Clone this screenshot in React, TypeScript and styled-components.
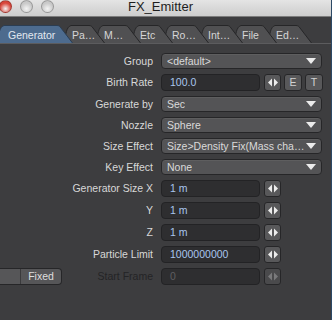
import React from "react";
import styled, { createGlobalStyle } from "styled-components";

const GlobalStyle = createGlobalStyle`
  html, body {
    margin: 0;
    padding: 0;
    background: #3d3d3f;
  }
  body {
    font-family: "Lucida Grande", "Liberation Sans", Arial, sans-serif;
    -webkit-font-smoothing: antialiased;
  }
`;

type tab = {
  label: string;
  width: number;
};

const tabs: tab[] = [
  { label: "Pa…", width: 41 },
  { label: "M…", width: 45 },
  { label: "Etc", width: 41 },
  { label: "Ro…", width: 45 },
  { label: "Int…", width: 43 },
  { label: "File", width: 43 },
  { label: "Ed…", width: 44 },
];

type row =
  | { kind: "select"; label: string; value: string }
  | { kind: "number"; label: string; value: string; env?: boolean; off?: boolean };

const rows: row[] = [
  { kind: "select", label: "Group", value: "<default>" },
  { kind: "number", label: "Birth Rate", value: "100.0", env: true },
  { kind: "select", label: "Generate by", value: "Sec" },
  { kind: "select", label: "Nozzle", value: "Sphere" },
  { kind: "select", label: "Size Effect", value: "Size>Density Fix(Mass cha…" },
  { kind: "select", label: "Key Effect", value: "None" },
  { kind: "number", label: "Generator Size X", value: "1 m" },
  { kind: "number", label: "Y", value: "1 m" },
  { kind: "number", label: "Z", value: "1 m" },
  { kind: "number", label: "Particle Limit", value: "1000000000" },
  { kind: "number", label: "Start Frame", value: "0", off: true },
];

// tab outline, slanted on the right
const TabShape = ({ w, selected }: { w: number; selected?: boolean }) => (
  <TabSvg width={w} height={18} viewBox={`0 0 ${w} 18`}>
    <path
      d={`M0.5 18 C1.5 9 2.5 2 7 0.5 L${w - 16} 0.5 C${w - 14} 0.5 ${w - 13} 1.5 ${w - 12} 3 L${w - 0.5} 18`}
      fill={selected ? "#4d6b8e" : "#505052"}
      stroke={selected ? "#2b3d52" : "#262628"}
      strokeWidth="1"
    />
  </TabSvg>
);

const ArrowsIcon = ({ dim }: { dim?: boolean }) => (
  <svg width="10" height="9" viewBox="0 0 10 9">
    <path d="M4 0.5 L4 8.5 L0 4.5 Z M6 0.5 L6 8.5 L10 4.5 Z" fill={dim ? "#7a7a7c" : "#ececec"} />
  </svg>
);

const DownArrow = () => (
  <svg width="10" height="6" viewBox="0 0 10 6">
    <path d="M0 0 L10 0 L5 6 Z" fill="#ececec" />
  </svg>
);

const App: React.FC = () => {
  return (
    <>
      <GlobalStyle />
      <Window>
        <TitleBar>
          <Lights>
            <Light color="#d8453a" />
            <Light color="#c9c9c9" />
            <Light color="#c9c9c9" />
          </Lights>
          <Title>FX_Emitter</Title>
        </TitleBar>
        <TabBar>
          <Tab w={76} first selected>
            <TabShape w={76} selected />
            <TabLabel selected>Generator</TabLabel>
          </Tab>
          {tabs.map((t, i) => (
            <Tab key={t.label} w={t.width} z={tabs.length - i}>
              <TabShape w={t.width} />
              <TabLabel>{t.label}</TabLabel>
            </Tab>
          ))}
        </TabBar>
        <Divider />
        <Form>
          {rows.map((r) => (
            <Row key={r.label} tall={r.kind === "number"}>
              <LabelCell>
                {r.label === "Start Frame" ? (
                  <FixedButton>
                    <FixedBox />
                    <FixedText>Fixed</FixedText>
                  </FixedButton>
                ) : (
                  <span />
                )}
                <Label off={r.kind === "number" && r.off}>{r.label}</Label>
              </LabelCell>
              {r.kind === "select" ? (
                <Select>
                  <SelectText>{r.value}</SelectText>
                  <DownArrow />
                </Select>
              ) : (
                <Controls>
                  <NumberField off={r.off}>{r.value}</NumberField>
                  <SmallButton off={r.off}>
                    <ArrowsIcon dim={r.off} />
                  </SmallButton>
                  {r.env ? (
                    <>
                      <SmallButton wide>E</SmallButton>
                      <SmallButton wide>T</SmallButton>
                    </>
                  ) : null}
                </Controls>
              )}
            </Row>
          ))}
        </Form>
      </Window>
    </>
  );
};

export default App;

const Window = styled.div`
  width: 332px;
  height: 320px;
  overflow: hidden;
  background: #3d3d3f;
  box-sizing: border-box;
  border-right: 1px solid #2c4966;
`;

const TitleBar = styled.div`
  height: 16px;
  display: flex;
  align-items: center;
  background: linear-gradient(#e4e4e4, #cdcdcd);
  border-bottom: 1px solid #7c7c7c;
  overflow: hidden;
`;

const Lights = styled.div`
  display: flex;
  gap: 8px;
  margin-left: -1px;
  margin-top: -3px;
`;

const Light = styled.div<{ color: string }>`
  width: 13px;
  height: 13px;
  border-radius: 50%;
  box-sizing: border-box;
  border: 1px solid rgba(0, 0, 0, 0.25);
  background: radial-gradient(circle at 50% 70%, #f4f4f4 0%, ${({ color }) => color} 60%);
`;

const Title = styled.span`
  margin-left: 74px;
  margin-top: -3px;
  font-size: 13px;
  color: #1e1e1e;
  cursor: default;
`;

const TabBar = styled.div`
  display: flex;
  margin-top: 8px;
  height: 18px;
`;

const Tab = styled.div<{ w: number; first?: boolean; selected?: boolean; z?: number }>`
  position: relative;
  width: ${({ w }) => w}px;
  height: 18px;
  margin-left: ${({ first }) => (first ? "-3px" : "-9px")};
  z-index: ${({ selected, z }) => (selected ? 20 : z || 1)};
  flex-shrink: 0;
  display: flex;
  align-items: center;
`;

const TabSvg = styled.svg`
  position: absolute;
  left: 0;
  top: 0;
`;

const TabLabel = styled.span<{ selected?: boolean }>`
  position: relative;
  padding-left: ${({ selected }) => (selected ? "11px" : "8px")};
  padding-top: 1px;
  font-size: 10.5px;
  color: ${({ selected }) => (selected ? "#e2e8f0" : "#d6d6d6")};
  white-space: nowrap;
`;

const Divider = styled.div`
  height: 1px;
  background: #5c5c5e;
`;

const Form = styled.div`
  padding-top: 6px;
  display: flex;
  flex-direction: column;
`;

const Row = styled.div<{ tall?: boolean }>`
  display: grid;
  grid-template-columns: 153px 1fr;
  column-gap: 8px;
  align-items: center;
  height: ${({ tall }) => (tall ? "22px" : "21px")};
`;

const LabelCell = styled.div`
  display: flex;
  justify-content: space-between;
  align-items: center;
`;

const Label = styled.span<{ off?: boolean }>`
  font-size: 10.5px;
  color: ${({ off }) => (off ? "#242426" : "#d8d8d8")};
  white-space: nowrap;
`;

const FixedButton = styled.div`
  display: flex;
  width: 62px;
  height: 17px;
  box-sizing: border-box;
  border: 1px solid #262628;
  border-left: 0;
  border-radius: 0 4px 4px 0;
  background: #565658;
  overflow: hidden;
`;

const FixedBox = styled.div`
  width: 20px;
  border-right: 1px solid #3a3a3c;
`;

const FixedText = styled.span`
  flex: 1;
  text-align: center;
  font-size: 10.5px;
  line-height: 15px;
  color: #dedede;
`;

const Select = styled.div`
  width: 161px;
  height: 16px;
  box-sizing: border-box;
  display: flex;
  align-items: center;
  justify-content: space-between;
  padding: 0 5px 0 5px;
  background: #545456;
  border: 1px solid #262628;
  border-radius: 4px;
  box-shadow: inset 0 1px 0 rgba(255, 255, 255, 0.06);
`;

const SelectText = styled.span`
  font-size: 10.5px;
  color: #dadada;
  white-space: nowrap;
  overflow: hidden;
`;

const Controls = styled.div`
  display: flex;
  align-items: center;
  gap: 3px;
`;

const NumberField = styled.div<{ off?: boolean }>`
  width: 99px;
  height: 17px;
  box-sizing: border-box;
  padding-left: 8px;
  margin-right: 1px;
  display: flex;
  align-items: center;
  background: #2e2e30;
  border: 1px solid #232325;
  border-radius: 4px;
  font-size: 10.5px;
  color: ${({ off }) => (off ? "#5e5e60" : "#a9c6ee")};
`;

const SmallButton = styled.div<{ wide?: boolean; off?: boolean }>`
  width: ${({ wide }) => (wide ? "18px" : "17px")};
  height: 17px;
  box-sizing: border-box;
  display: flex;
  align-items: center;
  justify-content: center;
  background: ${({ off }) => (off ? "#4a4a4c" : "#58585a")};
  border: 1px solid #262628;
  border-radius: 3px;
  font-size: 10.5px;
  color: #d2d2d2;
`;
